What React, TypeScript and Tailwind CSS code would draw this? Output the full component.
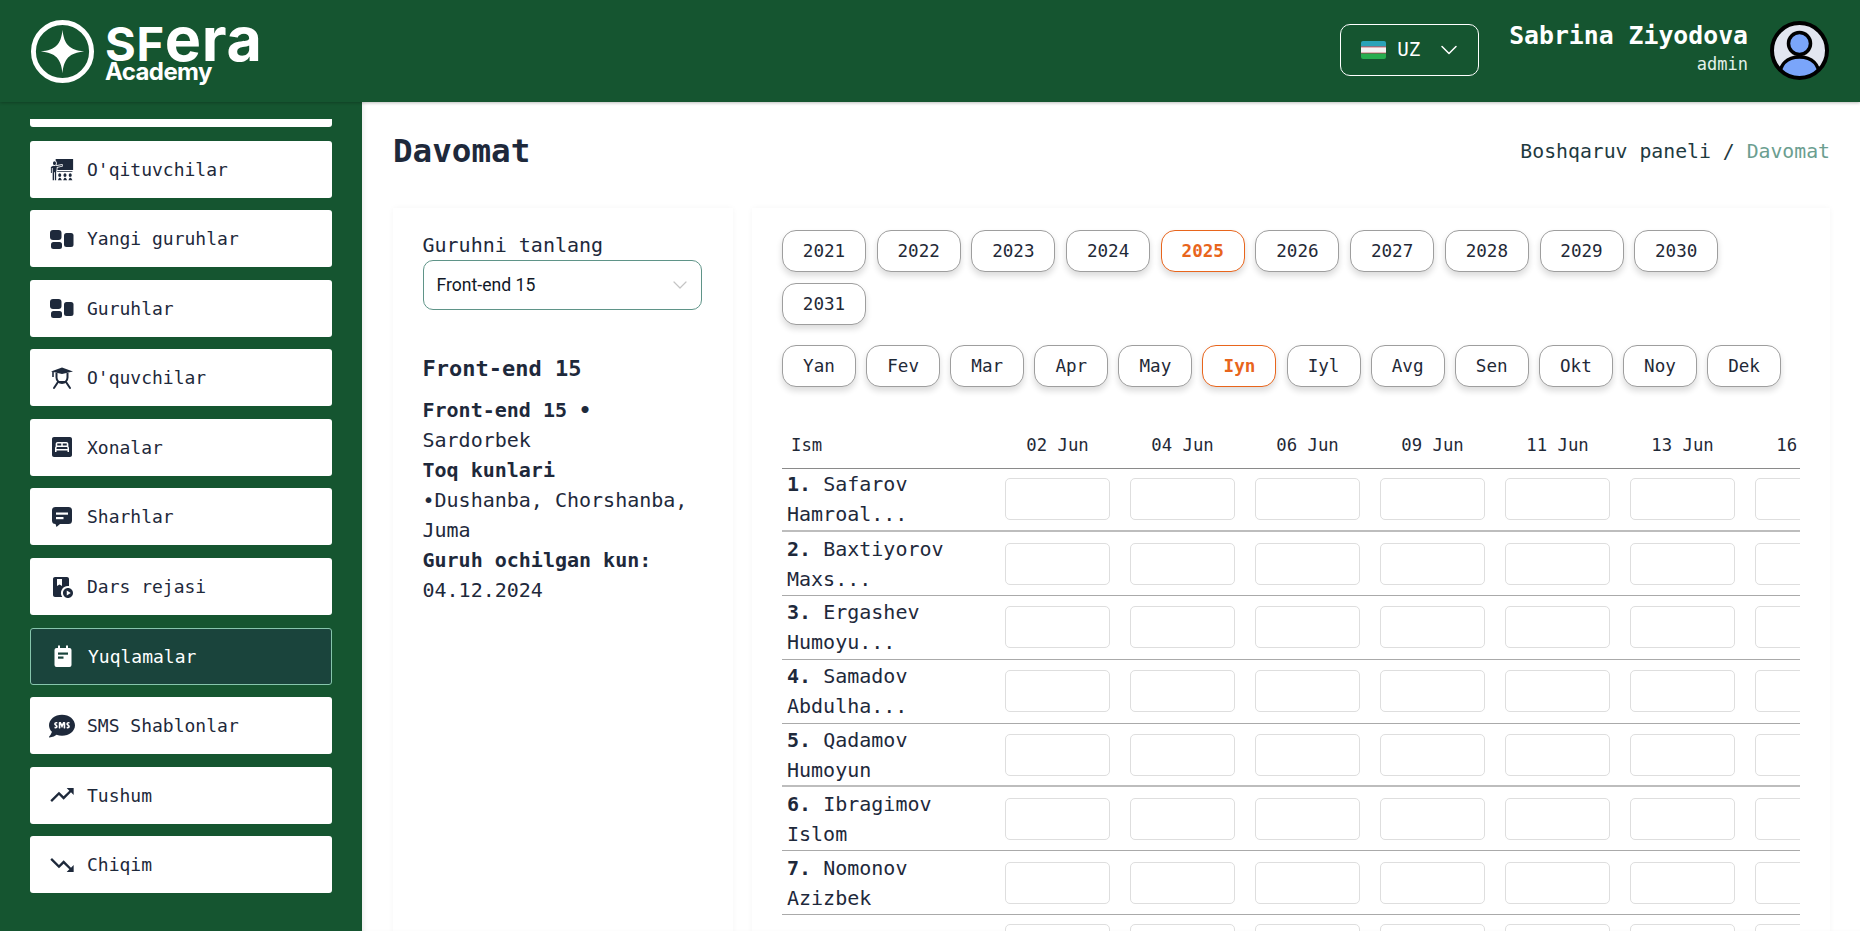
import type { ReactNode } from "react"
import { ChevronDown } from "lucide-react"
import { GiTeacher } from "react-icons/gi"
import { MdBedroomParent, MdPlayLesson, MdTrendingUp, MdTrendingDown } from "react-icons/md"
import { FaSms } from "react-icons/fa"

const MONO = "font-['DejaVu_Sans_Mono',monospace]"

function GroupsIcon() {
  return (
    <svg viewBox="0 0 24 24" className="h-6 w-6" fill="#1e293b">
      <rect x="0" y="3" width="11.5" height="10" rx="3" />
      <rect x="1" y="15" width="11" height="7" rx="2.5" />
      <rect x="14" y="6" width="9.5" height="14" rx="2.5" />
    </svg>
  )
}

function StudentIcon() {
  return (
    <svg viewBox="0 0 24 24" className="h-6 w-6">
      <path d="M12 1.5 23 5.5 12 8 1 5.5Z" fill="#1e293b" />
      <path d="M3 5.5V11" stroke="#1e293b" strokeWidth="1.6" fill="none" />
      <path d="M6.5 7v4.5a5.5 5.5 0 0 0 11 0V7" stroke="#1e293b" strokeWidth="2" fill="none" />
      <path d="M4 22l4-6h8l4 6" stroke="#1e293b" strokeWidth="2" fill="none" strokeLinecap="round" />
    </svg>
  )
}

function CommentIcon() {
  return (
    <svg viewBox="0 0 24 24" className="h-6 w-6">
      <path d="M5.5 2h13A3.5 3.5 0 0 1 22 5.5v10a3.5 3.5 0 0 1-3.5 3.5H10l-3.5 3-1-3A3.5 3.5 0 0 1 2 15.5v-10A3.5 3.5 0 0 1 5.5 2Z" fill="#1e293b" />
      <rect x="6" y="7.5" width="12" height="2.2" fill="#fff" />
      <rect x="6" y="12" width="7.5" height="2.2" fill="#fff" />
    </svg>
  )
}

function AttendanceIcon() {
  return (
    <svg viewBox="0 0 24 24" className="h-6 w-6" fill="#fff">
      <path d="M7 1.5h2V4h6V1.5h2V4h1.5A2 2 0 0 1 20.5 6v15a2 2 0 0 1-2 2h-13a2 2 0 0 1-2-2V6a2 2 0 0 1 2-2H7z" />
      <rect x="7" y="8.5" width="10" height="2.2" fill="#1a443c" />
      <rect x="7" y="12.5" width="5.5" height="2.2" fill="#1a443c" />
    </svg>
  )
}

type NavItem = { label: string; icon: ReactNode; active?: boolean }

const iconCls = "h-6 w-6 text-[#1e293b]"
const wideIconCls = "-mx-[2px] h-[28px] w-[28px] text-[#1e293b]"

const NAV: NavItem[] = [
  { label: "O'qituvchilar", icon: <GiTeacher className={iconCls} /> },
  { label: "Yangi guruhlar", icon: <GroupsIcon /> },
  { label: "Guruhlar", icon: <GroupsIcon /> },
  { label: "O'quvchilar", icon: <StudentIcon /> },
  { label: "Xonalar", icon: <MdBedroomParent className={iconCls} /> },
  { label: "Sharhlar", icon: <CommentIcon /> },
  { label: "Dars rejasi", icon: <MdPlayLesson className={iconCls} /> },
  { label: "Yuqlamalar", icon: <AttendanceIcon />, active: true },
  { label: "SMS Shablonlar", icon: <FaSms className="-mx-[1px] h-[26px] w-[26px] text-[#1e293b]" /> },
  { label: "Tushum", icon: <MdTrendingUp className={wideIconCls} /> },
  { label: "Chiqim", icon: <MdTrendingDown className={wideIconCls} /> },
]

const YEARS = ["2021", "2022", "2023", "2024", "2025", "2026", "2027", "2028", "2029", "2030", "2031"]
const MONTHS = ["Yan", "Fev", "Mar", "Apr", "May", "Iyn", "Iyl", "Avg", "Sen", "Okt", "Noy", "Dek"]
const DATES = ["02 Jun", "04 Jun", "06 Jun", "09 Jun", "11 Jun", "13 Jun", "16 Jun"]

const STUDENTS = [
  { name: "Safarov", rest: "Hamroal...", line: "border-b-2 border-[#bdbdbd]" },
  { name: "Baxtiyorov", rest: "Maxs...", line: "border-b border-[#aaaaaa]" },
  { name: "Ergashev", rest: "Humoyu...", line: "border-b border-[#aaaaaa]" },
  { name: "Samadov", rest: "Abdulha...", line: "border-b border-[#aaaaaa]" },
  { name: "Qadamov", rest: "Humoyun", line: "border-b-2 border-[#bdbdbd]" },
  { name: "Ibragimov", rest: "Islom", line: "border-b border-[#aaaaaa]" },
  { name: "Nomonov", rest: "Azizbek", line: "border-b border-[#aaaaaa]" },
]

function Logo() {
  return (
    <div className="flex items-start">
      <svg viewBox="0 0 66 66" className="h-[65px] w-[65px] shrink-0">
        <circle cx="33" cy="33" r="29.5" fill="none" stroke="#fff" strokeWidth="5" />
        <path d="M33 11 C34.5 26 40 31.5 55 33 C40 34.5 34.5 40 33 55 C31.5 40 26 34.5 11 33 C26 31.5 31.5 26 33 11Z" fill="#fff" />
      </svg>
      <div className="ml-[10px] flex flex-col font-['Inter',sans-serif] font-bold text-white">
        <div className="flex h-[40px] items-baseline leading-[40px]">
          <span className="block h-[40px] text-[47px] tracking-[0.7px]">SF</span>
          <span className="block h-[40px] text-[61px] tracking-[0.7px]">era</span>
        </div>
        <div className="mt-[1px] text-[24px] leading-[24px] tracking-[-0.6px]">Academy</div>
      </div>
    </div>
  )
}

function UzFlag() {
  return (
    <svg viewBox="0 0 25 18" className="h-[18px] w-[25px] rounded-[2px]">
      <rect width="25" height="6" fill="#2aa3b8" />
      <rect y="6" width="25" height="6" fill="#f3f3f3" />
      <rect y="5.4" width="25" height="1" fill="#c9545c" />
      <rect y="11.6" width="25" height="1" fill="#c9545c" />
      <rect y="12.6" width="25" height="5.4" fill="#27ae4f" />
    </svg>
  )
}

function Avatar() {
  return (
    <svg viewBox="0 0 59 59" className="h-[59px] w-[59px] shrink-0">
      <defs>
        <clipPath id="avatar-clip">
          <circle cx="29.5" cy="29.5" r="27.5" />
        </clipPath>
      </defs>
      <circle cx="29.5" cy="29.5" r="27.5" fill="#e2e6f0" />
      <g clipPath="url(#avatar-clip)">
        <path d="M9 59 C9 42 18 36 29.5 36 C41 36 50 42 50 59Z" fill="#7aa5fa" stroke="#000" strokeWidth="3.5" />
      </g>
      <circle cx="29.5" cy="22.5" r="11" fill="#7aa5fa" stroke="#000" strokeWidth="3.5" />
      <circle cx="29.5" cy="29.5" r="27.5" fill="none" stroke="#000" strokeWidth="4" />
    </svg>
  )
}

function Pill({ label, active, width }: { label: string; active: boolean; width: string }) {
  return (
    <button
      className={`h-[42px] ${width} rounded-[14px] border bg-white pt-[1px] text-[17.6px] shadow-[0_4px_6px_rgba(0,0,0,0.14)] ${
        active ? "border-[#e8651c] font-bold text-[#e8651c]" : "border-[#9e9e9e] text-[#1f2937]"
      }`}
    >
      {label}
    </button>
  )
}

export default function App() {
  return (
    <div className={`flex h-screen flex-col overflow-hidden bg-white ${MONO}`}>
      {/* Header */}
      <header className="z-10 flex h-[102px] shrink-0 items-center justify-between bg-[#155530] pl-[30px] pr-[31px] shadow-[0_1px_3px_rgba(0,0,0,0.25)]">
        <Logo />
        <div className="flex items-center pb-[2px]">
          <button className="flex h-[52px] w-[139px] items-center rounded-[10px] border border-white pl-[20px] text-white">
            <UzFlag />
            <span className="ml-[11px] text-[19.2px]">UZ</span>
            <ChevronDown className="ml-[15px] h-[28px] w-[28px]" strokeWidth={1.3} />
          </button>
          <div className="mb-[5px] ml-[30px] flex flex-col items-end text-white">
            <span className="text-[24.8px] font-bold leading-[32px]">Sabrina Ziyodova</span>
            <span className="text-[17px] leading-[24px] text-[#e3f1ea]">admin</span>
          </div>
          <div className="ml-[22px]">
            <Avatar />
          </div>
        </div>
      </header>

      <div className="flex min-h-0 flex-1">
        {/* Sidebar */}
        <aside className="flex w-[362px] shrink-0 flex-col bg-[#155530] pl-[30px] pr-[30px] pt-[17px]">
          <div className="mb-[13.5px] h-[8px] rounded-b-[3px] bg-white" />
          <nav className="flex flex-col gap-[12.6px]">
            {NAV.map((item) => (
              <a
                key={item.label}
                className={`flex h-[57px] items-center gap-[13px] rounded-[3px] pl-[20px] text-[18px] ${
                  item.active
                    ? "border border-[#86c5ac] bg-[#1a443c] text-white"
                    : "bg-white text-[#1e293b]"
                }`}
              >
                {item.icon}
                {item.label}
              </a>
            ))}
          </nav>
        </aside>

        {/* Content */}
        <main className="min-w-0 flex-1 pl-[31px] pr-[30px] shadow-[inset_4px_0_6px_-4px_rgba(0,0,0,0.12)]">
          <div className="flex h-[106px] items-center justify-between pb-[7px]">
            <h1 className="text-[32.6px] font-bold text-[#1e293b]">Davomat</h1>
            <div className="text-[19.8px] text-[#1e3a3f]">
              Boshqaruv paneli / <span className="text-[#6b9e90]">Davomat</span>
            </div>
          </div>

          <div className="flex gap-[19px]">
            {/* Group info */}
            <section className="h-[760px] w-[340px] shrink-0 px-[29.5px] pt-[22px] shadow-[0_0_6px_rgba(0,0,0,0.04)]">
              <div className="text-[20px] leading-[30px] text-[#1e293b]">Guruhni tanlang</div>
              <div className="flex h-[50px] w-[279px] items-center justify-between rounded-[10px] border border-[#5f9488] pl-[13px] pr-[9px] font-['Roboto',sans-serif] text-[17.6px] text-[#111827]">
                Front-end 15
                <ChevronDown className="h-[24px] w-[24px] text-[#c4c4c4]" strokeWidth={1.2} />
              </div>
              <h2 className="mt-[42px] text-[22px] font-bold leading-[33px] text-[#1e293b]">Front-end 15</h2>
              <p className="mt-[10px] w-[280px] text-[20px] leading-[30px] text-[#1e293b]">
                <b>Front-end 15 •</b> Sardorbek
                <br />
                <b>Toq kunlari</b>
                <br />
                •Dushanba, Chorshanba, Juma
                <br />
                <b>Guruh ochilgan kun:</b>
                <br />
                04.12.2024
              </p>
            </section>

            {/* Attendance */}
            <section className="h-[760px] min-w-0 flex-1 px-[30px] pt-[22px] shadow-[0_0_6px_rgba(0,0,0,0.04)]">
              <div className="flex flex-wrap gap-x-[10.7px] gap-y-[11px]">
                {YEARS.map((y) => (
                  <Pill key={y} label={y} active={y === "2025"} width="w-[84px]" />
                ))}
              </div>
              <div className="mt-[20px] flex flex-wrap gap-x-[10.1px]">
                {MONTHS.map((m) => (
                  <Pill key={m} label={m} active={m === "Iyn"} width="w-[74px]" />
                ))}
              </div>

              <div className="mt-[37px] overflow-hidden">
                <div className="flex h-[44.5px] w-max items-center border-b border-[#8a8a8a] text-[17.3px] text-[#1f2937]">
                  <div className="w-[213px] pl-[9px]">Ism</div>
                  {DATES.map((d) => (
                    <div key={d} className="w-[125px] text-center">
                      {d}
                    </div>
                  ))}
                </div>
                {STUDENTS.map((s, i) => (
                  <div key={s.name} className={`flex h-[63.8px] w-max items-center ${s.line}`}>
                    <div className="w-[213px] pl-[5px] text-[20px] leading-[30px] text-[#1e293b]">
                      <b>{i + 1}.</b> {s.name}
                      <br />
                      {s.rest}
                    </div>
                    {DATES.map((d) => (
                      <div key={d} className="flex w-[125px] justify-center">
                        <div className="h-[42px] w-[105px] rounded-[5px] border border-[#dedede] bg-white" />
                      </div>
                    ))}
                  </div>
                ))}
                <div className="flex w-max pt-[9px]">
                  <div className="w-[213px]" />
                  {DATES.map((d) => (
                    <div key={d} className="flex w-[125px] justify-center">
                      <div className="h-[42px] w-[105px] rounded-[5px] border border-[#dedede] bg-white" />
                    </div>
                  ))}
                </div>
              </div>
            </section>
          </div>
        </main>
      </div>
    </div>
  )
}
